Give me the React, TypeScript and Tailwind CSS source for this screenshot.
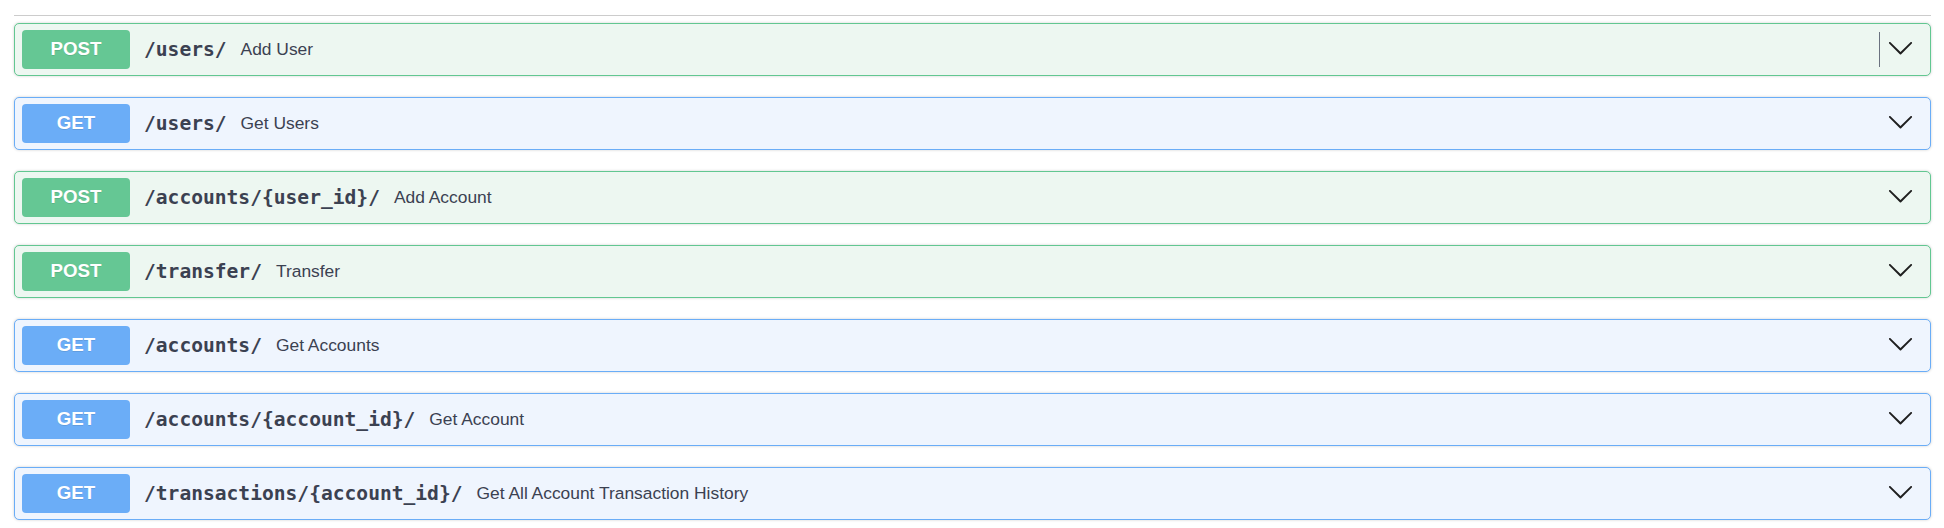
const OPS = [
  { method: 'POST', path: '/users/', summary: 'Add User', focused: true },
  { method: 'GET', path: '/users/', summary: 'Get Users' },
  { method: 'POST', path: '/accounts/{user_id}/', summary: 'Add Account' },
  { method: 'POST', path: '/transfer/', summary: 'Transfer' },
  { method: 'GET', path: '/accounts/', summary: 'Get Accounts' },
  { method: 'GET', path: '/accounts/{account_id}/', summary: 'Get Account' },
  { method: 'GET', path: '/transactions/{account_id}/', summary: 'Get All Account Transaction History' },
]

function Arrow() {
  return (
    <svg width="27" height="27" viewBox="0 0 20 20" className="fill-[#1f1f1f] shrink-0 mb-[4px]">
      <path d="M17.418 6.109c.272-.268.709-.268.979 0s.271.701 0 .969l-7.908 7.83c-.27.268-.707.268-.979 0l-7.908-7.83c-.27-.268-.27-.701 0-.969.271-.268.709-.268.979 0L10 13.25l7.418-7.141z" />
    </svg>
  )
}

function OpBlock({ method, path, summary, focused }: { method: string; path: string; summary: string; focused?: boolean }) {
  const post = method === 'POST'
  return (
    <div
      className={
        post
          ? 'h-[53px] flex items-center pl-[7px] pr-[16px] rounded-[5px] border border-[#62c791] bg-[#edf7f1] shadow-[0_0_3px_rgba(0,0,0,0.19)]'
          : 'h-[53px] flex items-center pl-[7px] pr-[16px] rounded-[5px] border border-[#6aadf7] bg-[#eff5fe] shadow-[0_0_3px_rgba(0,0,0,0.19)]'
      }
    >
      <span
        className={
          post
            ? 'w-[108px] h-[39px] shrink-0 flex items-center justify-center rounded-[4px] bg-[#65c794] text-white font-bold text-[18.7px] [text-shadow:0_1px_0_rgba(0,0,0,0.1)]'
            : 'w-[108px] h-[39px] shrink-0 flex items-center justify-center rounded-[4px] bg-[#6badf7] text-white font-bold text-[18.7px] [text-shadow:0_1px_0_rgba(0,0,0,0.1)]'
        }
        style={{ fontFamily: '"Liberation Sans", Arial, sans-serif' }}
      >
        {method}
      </span>
      <span
        className="ml-[14px] text-[19.6px] font-bold text-[#3b4151] whitespace-nowrap"
        style={{ fontFamily: '"DejaVu Sans Mono", monospace' }}
      >
        {path}
      </span>
      <span
        className="ml-[14px] text-[17.4px] text-[#3b4151] whitespace-nowrap"
        style={{ fontFamily: '"Liberation Sans", Arial, sans-serif' }}
      >
        {summary}
      </span>
      <div className="flex-1" />
      {focused && <span className="w-px h-[35px] bg-[#6b7280] mr-[7px]" />}
      <Arrow />
    </div>
  )
}

export default function App() {
  return (
    <div className="w-[1944px] h-[528px] bg-white pl-[14px] pr-[13px] pt-[15px]">
      <div className="h-px bg-[#cccccc]" />
      <div className="mt-[7px] flex flex-col gap-[21px]">
        {OPS.map((op, i) => (
          <OpBlock key={i} {...op} />
        ))}
      </div>
    </div>
  )
}
